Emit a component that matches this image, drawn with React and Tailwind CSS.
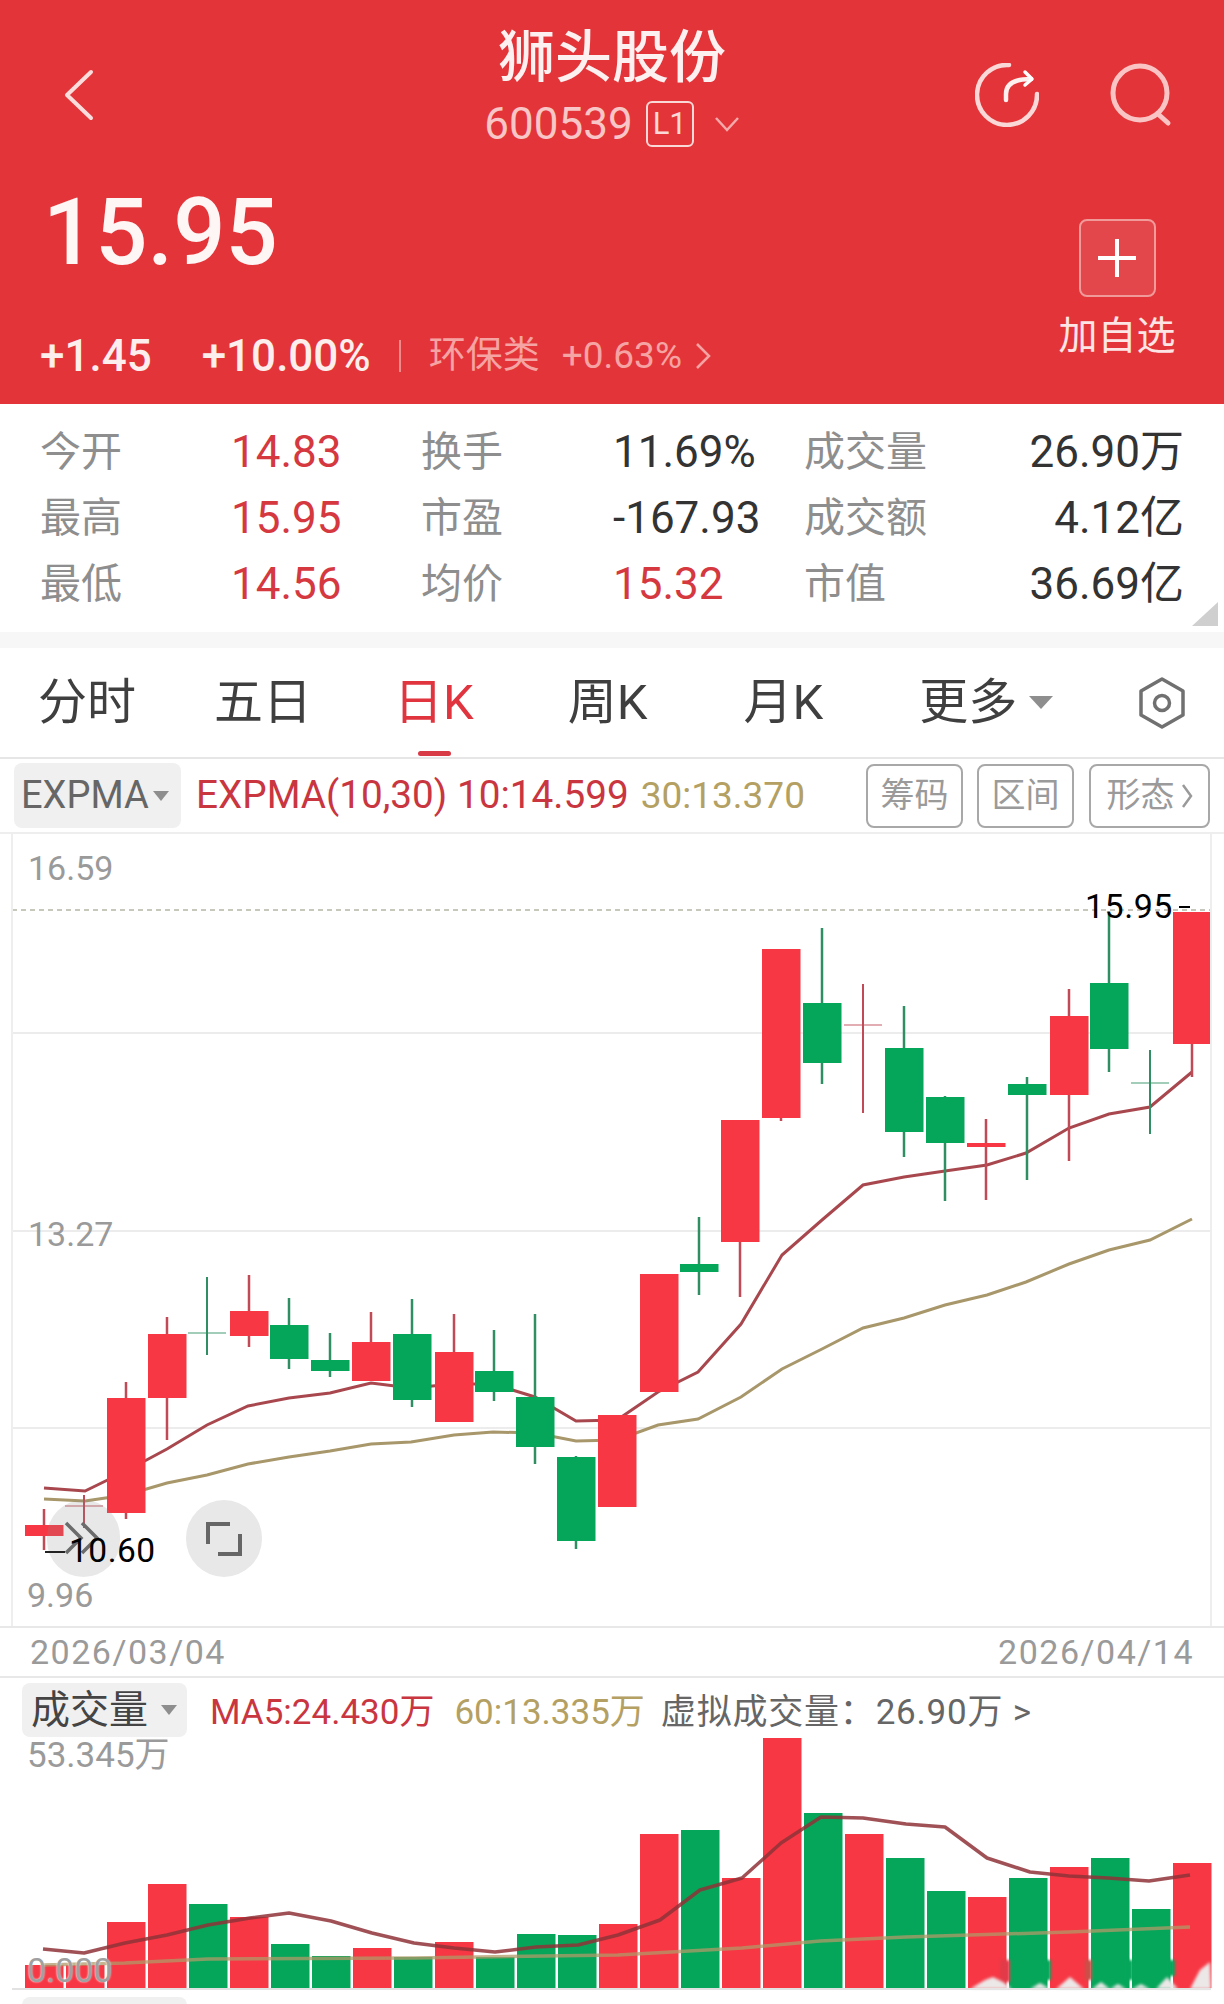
import React from "react";

const FONT = "font-['Roboto','Noto_Sans_CJK_SC',sans-serif]";

// tone, left edge, body top, body bottom, wick top, wick bottom, doji
const CANDLES = [
  ["r", 25, 1525, 1536, 1509, 1550],
  ["r", 65, 1505, 1507, 1495, 1528, "x"],
  ["r", 107, 1398, 1513, 1382, 1519],
  ["r", 148, 1334, 1398, 1317, 1440],
  ["g", 188, 1332, 1334, 1277, 1355, "x"],
  ["r", 230, 1311, 1336, 1275, 1347],
  ["g", 270, 1325, 1359, 1298, 1369],
  ["g", 311, 1360, 1371, 1333, 1377],
  ["r", 352, 1342, 1381, 1312, 1381],
  ["g", 393, 1334, 1400, 1299, 1407],
  ["r", 435, 1352, 1422, 1314, 1422],
  ["g", 475, 1371, 1392, 1330, 1401],
  ["g", 516, 1397, 1447, 1314, 1464],
  ["g", 557, 1457, 1541, 1456, 1549],
  ["r", 598, 1415, 1507, 1415, 1507],
  ["r", 640, 1274, 1392, 1274, 1392],
  ["g", 680, 1264, 1272, 1217, 1295],
  ["r", 721, 1120, 1242, 1120, 1297],
  ["r", 762, 949, 1118, 949, 1121],
  ["g", 803, 1003, 1063, 928, 1084],
  ["r", 844, 1024, 1026, 984, 1113, "x"],
  ["g", 885, 1048, 1132, 1006, 1157],
  ["g", 926, 1097, 1143, 1096, 1201],
  ["r", 967, 1143, 1147, 1119, 1200],
  ["g", 1008, 1084, 1095, 1077, 1180],
  ["r", 1050, 1016, 1095, 989, 1161],
  ["g", 1090, 983, 1049, 914, 1072],
  ["g", 1131, 1082, 1084, 1050, 1134, "x"],
  ["r", 1173, 912, 1044, 912, 1077],
];

const EMA10 = "44,1488 85,1491 126,1471 167,1449 207,1425 248,1406 289,1398 330,1393 371,1383 411,1388 454,1384 493,1384 535,1397 576,1421 617,1420 658,1392 698,1372 741,1324 782,1255 822,1220 863,1185 904,1177 945,1171 987,1165 1026,1153 1069,1128 1109,1114 1150,1107 1192,1072";
const EMA30 = "44,1499 85,1501 126,1495 167,1483 207,1475 248,1464 289,1457 330,1451 371,1444 411,1442 454,1435 493,1432 535,1433 576,1441 617,1440 658,1425 698,1419 741,1397 782,1369 822,1349 863,1328 904,1318 945,1305 987,1295 1026,1282 1069,1264 1109,1250 1150,1240 1192,1219";

const VOLUME = [
  ["r", 1965], ["r", 1965], ["r", 1922], ["r", 1884], ["g", 1904], ["r", 1917], ["g", 1944], ["g", 1956],
  ["r", 1948], ["g", 1957], ["r", 1942], ["g", 1957], ["g", 1934], ["g", 1935], ["r", 1924], ["r", 1834],
  ["g", 1830], ["r", 1878], ["r", 1738], ["g", 1813], ["r", 1834], ["g", 1858], ["g", 1891], ["r", 1897],
  ["g", 1878], ["r", 1867], ["g", 1858], ["g", 1909], ["r", 1863],
];

const MA5 = "43,1949 84,1953 125,1943 167,1935 208,1925 250,1918 289,1913 331,1921 372,1933 414,1943 454,1948 495,1952 536,1947 578,1945 618,1935 660,1920 700,1890 742,1878 781,1843 821,1817 863,1818 906,1824 945,1827 987,1858 1030,1872 1069,1876 1108,1878 1149,1881 1190,1875";
const MA60 = "43,1965 125,1963 208,1959 414,1958 618,1955 742,1948 820,1941 906,1937 1069,1932 1190,1927";

const STATS = [
  ["今开", "14.83", "red"], ["换手", "11.69%"], ["成交量", "26.90万"],
  ["最高", "15.95", "red"], ["市盈", "-167.93"], ["成交额", "4.12亿"],
  ["最低", "14.56", "red"], ["均价", "15.32", "red"], ["市值", "36.69亿"],
];

const RED = "#f73744";
const GREEN = "#05a65a";

function OutlineBtn({ children, className }) {
  return (
    <div className={`flex h-[64px] items-center justify-center rounded-lg border-2 border-[#a8a8a8] text-[34px] text-[#9a9a9a] ${className}`}>
      {children}
    </div>
  );
}

function Caret({ className }) {
  return <span className={`border-x-[8px] border-t-[10px] border-x-transparent border-t-[#8e8e8e] ${className}`} />;
}

function Candle({ c }) {
  const [tone, x, top, bottom, wickTop, wickBottom, cross] = c;
  const mid = x + 19;
  const fill = tone === "r" ? RED : GREEN;
  const wick = tone === "r" ? "#c04a55" : "#2f8f63";
  if (cross) {
    return (
      <g>
        <line x1={mid} x2={mid} y1={wickTop} y2={wickBottom} stroke={wick} strokeWidth="2" />
        <line x1={x} x2={x + 38} y1={top + 1} y2={top + 1} stroke={wick} strokeOpacity="0.6" strokeWidth="1.5" />
      </g>
    );
  }
  return (
    <g>
      <line x1={mid} x2={mid} y1={wickTop} y2={wickBottom} stroke={wick} strokeWidth="2.5" />
      <rect x={x} y={top} width="38.5" height={bottom - top} fill={fill} />
    </g>
  );
}

function Chart() {
  return (
    <svg viewBox="0 834 1224 792" className="absolute left-0 top-0 h-[792px] w-[1224px]">
      {[1033, 1231, 1428].map((y) => (
        <line key={y} x1="12" x2="1210" y1={y} y2={y} stroke="#ececec" strokeWidth="2" />
      ))}
      <line x1="12" x2="1210" y1="910" y2="910" stroke="#b5b5a5" strokeWidth="1.5" strokeDasharray="5 4" />
      <polyline points={EMA30} fill="none" stroke="#a8976a" strokeWidth="3" />
      <polyline points={EMA10} fill="none" stroke="#a8484e" strokeWidth="3" />
      {CANDLES.map((c) => <Candle key={c[1]} c={c} />)}
    </svg>
  );
}

function VolumeChart() {
  return (
    <svg viewBox="0 1678 1224 326" className="absolute left-0 top-0 h-[326px] w-[1224px]">
      {VOLUME.map(([tone, top], i) => {
        const x = 25 + i * 41;
        return <rect key={i} x={x} y={top} width="38.5" height={1988 - top} fill={tone === "r" ? RED : GREEN} />;
      })}
      <polyline points={MA60} fill="none" stroke="#b09a68" strokeOpacity="0.75" strokeWidth="3.5" />
      <polyline points={MA5} fill="none" stroke="#8f3338" strokeOpacity="0.85" strokeWidth="3.5" strokeLinejoin="round" />
      <line x1="12" x2="1211" y1="1989" y2="1989" stroke="#e2e2e2" strokeWidth="2" />
      {/* smudged corner: the gaps between bars blur shut near the bottom */}
      <g className="blur-[1.5px]">
        <rect x="1000" y="1960" width="10" height="22" fill="#e23a48" />
        <rect x="1044" y="1960" width="7" height="20" fill={GREEN} />
        <rect x="1085" y="1960" width="7" height="20" fill="#c75048" />
        <rect x="1126" y="1960" width="7" height="20" fill={GREEN} />
        <rect x="1168" y="1960" width="7" height="16" fill={GREEN} />
        <path d="M970 1989 985 1980 993 1977 1003 1982 1012 1989ZM1030 1989 1040 1983 1050 1989ZM1056 1989 1070 1977 1084 1989ZM1092 1989 1101 1982 1110 1989ZM1110 1989 1118 1984 1126 1989ZM1132 1989 1141 1984 1150 1989ZM1156 1989 1167 1977 1178 1989ZM1190 1989 1200 1970 1210 1962 1211 1989Z" fill="#ece8e8" />
      </g>
    </svg>
  );
}

export default function App() {
  return (
    <div className={`h-[2004px] w-[1224px] overflow-hidden bg-white ${FONT}`}>
      <header className="h-[404px] bg-[#e33539] text-white">
        <div className="grid grid-cols-[1fr_auto_1fr] items-start pt-[28px]">
          <svg width="30" height="52" viewBox="0 0 30 52" className="ml-[64px] mt-[41px]" fill="none" stroke="#fbdcdc" strokeWidth="4" strokeLinecap="round" strokeLinejoin="round">
            <path d="M27 3 3 26l24 23" />
          </svg>
          <div className="flex flex-col items-center">
            <div className="text-[57px] font-medium leading-[60px] text-[#fdf0f0]">狮头股份</div>
            <div className="mt-[11px] flex items-center">
              <span className="text-[44px] leading-[50px] text-[#f8c6c6]">600539</span>
              <span className="ml-[13px] flex h-[46px] w-[48px] items-center justify-center rounded-md border-2 border-[#fbd8d8] text-[31px] text-[#fbd8d8]">L1</span>
              <svg width="26" height="16" viewBox="0 0 26 16" className="ml-[20px]" fill="none" stroke="#f4a9aa" strokeWidth="2.5">
                <path d="M2 2 13 14 24 2" />
              </svg>
            </div>
          </div>
          <div className="mt-[35px] flex items-center justify-end gap-[71px] pr-[52px]">
            <svg width="64" height="64" viewBox="0 0 64 64" fill="none" stroke="#fbd8d8" strokeWidth="4.5" strokeLinecap="round" strokeLinejoin="round">
              <path d="M34 2A30 30 0 1 0 62 31" />
              <path d="M31 37V31C31 22 38 16 56 16" stroke="#fff0f0" />
              <path d="m50 9 7 7-7 6" stroke="#ffffff" strokeWidth="3.5" />
            </svg>
            <svg width="62" height="64" viewBox="0 0 62 64" fill="none" stroke="#fbc4c4" strokeWidth="5" strokeLinecap="round">
              <circle cx="30" cy="30" r="27" />
              <path d="m48 51 10 9" />
            </svg>
          </div>
        </div>
        <div className="flex items-start justify-between pr-[50px]">
          <div>
            <div className="pl-[43px] pt-[34px] text-[92px] font-medium leading-[100px] text-[#fef5f5]">15.95</div>
            <div className="flex items-center pl-[40px] pt-[51px]">
              <span className="text-[44px] font-medium leading-[44px] text-[#fdeeee]">+1.45</span>
              <span className="ml-[50px] text-[44px] font-medium leading-[44px] text-[#fdeeee]">+10.00%</span>
              <span className="ml-[28px] h-[32px] w-[2px] bg-[#f08a8a]" />
              <span className="ml-[28px] text-[37px] leading-[44px] text-[#f6a3a3]">环保类</span>
              <span className="ml-[22px] text-[37px] leading-[44px] text-[#f6a3a3]">+0.63%</span>
              <svg width="16" height="28" viewBox="0 0 16 28" className="ml-[13px]" fill="none" stroke="#f6a3a3" strokeWidth="2.5">
                <path d="M2 2 14 14 2 26" />
              </svg>
            </div>
          </div>
          <div className="mt-[70px] flex w-[114px] flex-col items-center">
            <div className="flex h-[78px] w-[77px] items-center justify-center rounded-lg border-2 border-[#f09a9a] bg-[#e3474c]">
              <svg width="40" height="40" viewBox="0 0 40 40" stroke="#ffffff" strokeWidth="4">
                <path d="M20 1v38M1 20h38" />
              </svg>
            </div>
            <span className="mt-[18px] whitespace-nowrap text-[39px] leading-[42px] text-[#fde5e5]">加自选</span>
          </div>
        </div>
      </header>

      <section className="grid h-[228px] w-[1184px] grid-cols-[191px_190px_192px_191px_1fr_auto] content-start items-center gap-y-[23px] pl-[40px] pt-[27px] whitespace-nowrap">
        {STATS.map(([label, value, tone], i) => (
          <React.Fragment key={label}>
            <span className="text-[41px] leading-[43px] text-[#8e8e8e]">{label}</span>
            <span className={`text-[44px] leading-[43px] ${i % 3 === 2 ? "text-right" : ""} ${tone === "red" ? "text-[#d5383f]" : "text-[#333333]"}`}>{value}</span>
          </React.Fragment>
        ))}
      </section>

      <div className="relative h-[16px] bg-[#f7f7f7]">
        <div className="absolute right-[6px] top-[-30px] h-0 w-0 border-b-[24px] border-l-[26px] border-b-[#cfcfcf] border-l-transparent" />
      </div>

      <nav className="relative flex h-[109px] items-center text-[49px] leading-[60px] text-[#3f3f3f]">
        <span className="ml-[38px]">分时</span>
        <span className="ml-[78px]">五日</span>
        <span className="ml-[82px] text-[#e0343f]">日K</span>
        <span className="ml-[94px]">周K</span>
        <span className="ml-[96px]">月K</span>
        <span className="ml-[96px]">更多</span>
        <span className="ml-[12px] border-x-[12px] border-t-[13px] border-x-transparent border-t-[#8e8e8e]" />
        <svg width="48" height="52" viewBox="0 0 48 52" className="ml-[85px]" fill="none" stroke="#707070" strokeWidth="3.5" strokeLinejoin="round">
          <path d="M24 2 45 14v24L24 50 3 38V14Z" />
          <circle cx="24" cy="26" r="7.5" />
        </svg>
        <span className="absolute bottom-[1px] left-[418px] h-[5px] w-[33px] rounded-sm bg-[#d83a46]" />
      </nav>

      <div className="h-[2px] bg-[#e6e6e6]" />

      <div className="flex h-[73px] items-center pl-[14px] pr-[14px]">
        <div className="flex h-[65px] w-[167px] items-center rounded-lg bg-[#f0f0f0] pl-[7px] text-[38px] text-[#666666]">
          EXPMA
          <Caret className="ml-[4px]" />
        </div>
        <span className="ml-[15px] whitespace-nowrap text-[38.7px] text-[#c9363f]">EXPMA(10,30) 10:14.599</span>
        <span className="ml-[12px] whitespace-nowrap text-[37px] text-[#b3a062]">30:13.370</span>
        <OutlineBtn className="ml-auto w-[97px]">筹码</OutlineBtn>
        <OutlineBtn className="ml-[14px] w-[97px]">区间</OutlineBtn>
        <OutlineBtn className="ml-[15px] w-[121px] gap-[6px]">
          形态
          <svg width="12" height="26" viewBox="0 0 12 26" fill="none" stroke="#9a9a9a" strokeWidth="2.5">
            <path d="M2 2 10 13 2 24" />
          </svg>
        </OutlineBtn>
      </div>

      <div className="relative h-[794px] border-t-2 border-[#eeeeee]">
        <Chart />
        <span className="absolute left-[28px] top-[14px] text-[34px] leading-[40px] text-[#9a9a9a]">16.59</span>
        <span className="absolute left-[28px] top-[380px] text-[34px] leading-[40px] text-[#9a9a9a]">13.27</span>
        <span className="absolute left-[27px] top-[741px] text-[34px] leading-[40px] text-[#9a9a9a]">9.96</span>
        <span className="absolute left-[1085px] top-[52px] text-[34px] leading-[40px] tracking-[0.5px] text-black">15.95</span>
        <span className="absolute left-[1179px] top-[72px] h-[2px] w-[11px] bg-black" />
        <div className="absolute left-[47px] top-[666px] h-[77px] w-[73px] rounded-full bg-[#8c8c8c]/20" />
        <svg width="36" height="34" viewBox="0 0 36 34" className="absolute left-[64px] top-[687px]" fill="none" stroke="#6b6b6b" strokeWidth="3.5">
          <path d="M2 2 17 17 2 32M18 2 33 17 18 32" />
        </svg>
        <span className="absolute left-[45px] top-[717px] h-[2px] w-[20px] bg-[#222222]" />
        <span className="absolute left-[69px] top-[697px] text-[33.5px] leading-[40px] tracking-[0.5px] text-black">10.60</span>
        <div className="absolute left-[186px] top-[666px] flex h-[77px] w-[76px] items-center justify-center rounded-full bg-[#e8e8e8]">
          <svg width="36" height="34" viewBox="0 0 36 34" fill="none" stroke="#666666" strokeWidth="4">
            <path d="M2 22V2h22M34 12v20H12" />
          </svg>
        </div>
        <div className="absolute bottom-0 left-[11px] top-0 w-[2px] bg-[#eeeeee]" />
        <div className="absolute bottom-0 left-[1210px] top-0 w-[2px] bg-[#eeeeee]" />
      </div>

      <div className="flex h-[52px] items-center justify-between border-y-2 border-[#e8e8e8] pl-[30px] pr-[30px] text-[34px] tracking-[1.5px] text-[#9a9a9a]">
        <span>2026/03/04</span>
        <span>2026/04/14</span>
      </div>

      <div className="relative h-[326px]">
        <VolumeChart />
        <div className="absolute left-[22px] top-[5px] flex h-[54px] w-[165px] items-center rounded-lg bg-[#f0f0f0] pl-[9px] text-[39px] text-[#444444]">
          成交量
          <Caret className="ml-[13px]" />
        </div>
        <div className="absolute left-[210px] top-[15px] flex items-center whitespace-nowrap text-[35px] leading-[40px]">
          <span className="text-[#c9363f]">MA5:24.430万</span>
          <span className="ml-[20px] text-[#b3a062]">60:13.335万</span>
          <span className="ml-[16px] tracking-[0.8px] text-[#666666]">虚拟成交量：26.90万 &gt;</span>
        </div>
        <span className="absolute left-[27px] top-[58px] text-[35px] leading-[40px] text-[#9a9a9a]">53.345万</span>
        <span className="absolute left-[27px] top-[272px] text-[34px] leading-[40px] text-[#a0a0a0] [text-shadow:0_0_2px_#ffffff]">0.000</span>
        <div className="absolute left-[22px] top-[319px] h-[10px] w-[165px] rounded-t-lg bg-[#f0f0f0]" />
      </div>
    </div>
  );
}
